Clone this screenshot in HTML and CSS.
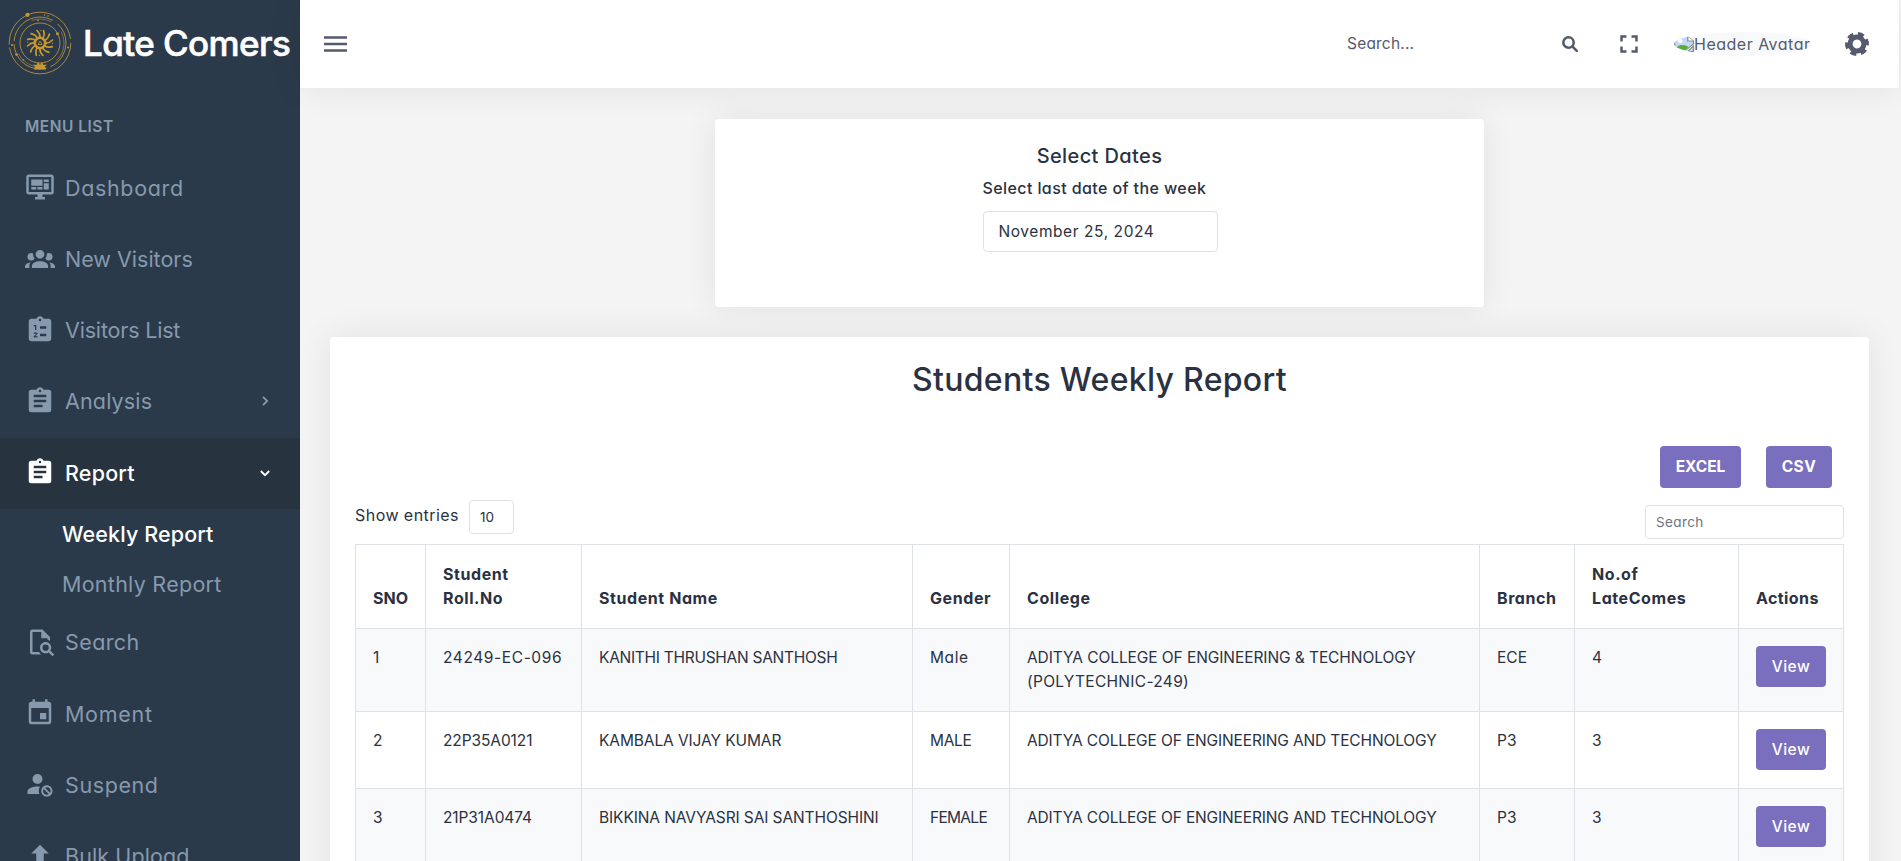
FILE: index.html
```html
<!DOCTYPE html>
<html lang="en">
<head>
<meta charset="utf-8">
<title>Late Comers - Students Weekly Report</title>
<link rel="stylesheet" href="styles.css">
</head>
<body>
<div class="app">
  <aside class="sidebar">
    <div class="brand">
      <svg class="brand-mark" viewBox="-32 -32 64 64" fill="none" stroke="#b98f3a">
        <circle r="30.8" stroke-width=".9" stroke-dasharray="92 3 94 4"/>
        <circle r="26" stroke-width=".9" stroke-dasharray="30 4 46 3 52 6"/>
        <circle r="24" stroke-width=".6" stroke-dasharray="20 14 30 40"/>
        <circle r="20" stroke-width=".9"/>
        <g fill="#c8972f" stroke="none">
          <circle cx="-12.5" cy="-28.2" r="2.1"/><circle cx="17.5" cy="-9.3" r="1.5"/>
          <circle cx="-23.5" cy="11.5" r="1.3"/><circle cx="-28" cy="2" r="1"/><circle cx="28" cy="4.5" r="1"/>
          <circle cx="8" cy="-27" r=".8"/><circle cx="4.5" cy="-28" r=".7"/><circle cx="-2" cy="-22.6" r=".8"/><circle cx="-16.5" cy="17" r=".8"/>
          <path d="M-6 26.5H6L5 23.5 7 21.5 3.5 22 2 19 0 22-2 19-3.500 22-7 21.500-5 23.500Z"/>
        </g>
        <circle r="5.200" stroke="#c8972f" stroke-width="2.600"/>
        <g stroke="#c8972f" stroke-width="1.700" stroke-linecap="round">
          <path id="ray" d="M5.500 0Q9 .5 12.500-3"/>
          <use href="#ray" transform="rotate(30)"/><use href="#ray" transform="rotate(60)"/><use href="#ray" transform="rotate(90)"/>
          <use href="#ray" transform="rotate(120)"/><use href="#ray" transform="rotate(150)"/><use href="#ray" transform="rotate(180)"/>
          <use href="#ray" transform="rotate(210)"/><use href="#ray" transform="rotate(240)"/><use href="#ray" transform="rotate(270)"/>
          <use href="#ray" transform="rotate(300)"/><use href="#ray" transform="rotate(330)"/>
        </g>
        <circle r="12.400" stroke="#c8972f" stroke-width="1.100" stroke-dasharray="1.100 8.640"/>
        <path d="M0-2L2 1.500H-2Z" stroke="#c8972f" stroke-width=".8"/>
      </svg>
      <span class="brand-name">Late Comers</span>
    </div>
    <div class="menu-title">MENU LIST</div>
    <nav class="menu">
      <a class="item"><svg class="ico" viewBox="0 0 24 24"><path d="M21,16V4H3V16H21M21,2A2,2 0 0,1 23,4V16A2,2 0 0,1 21,18H14V20H16V22H8V20H10V18H3C1.890,18 1,17.100 1,16V4C1,2.890 1.890,2 3,2H21M5,6H14V11H5V6M15,6H19V8H15V6M19,9V14H15V9H19M5,12H9V14H5V12M10,12H14V14H10V12Z"/></svg><span class="t-dash">Dashboard</span></a>
      <a class="item"><svg class="ico" viewBox="0 0 24 24"><path d="M12,5.500A3.500,3.500 0 0,1 15.500,9A3.500,3.500 0 0,1 12,12.500A3.500,3.500 0 0,1 8.500,9A3.500,3.500 0 0,1 12,5.500M5,8C5.560,8 6.080,8.150 6.530,8.420C6.380,9.850 6.800,11.270 7.660,12.380C7.160,13.340 6.160,14 5,14A3,3 0 0,1 2,11A3,3 0 0,1 5,8M19,8A3,3 0 0,1 22,11A3,3 0 0,1 19,14C17.840,14 16.840,13.340 16.340,12.380C17.200,11.270 17.620,9.850 17.470,8.420C17.920,8.150 18.440,8 19,8M5.500,18.250C5.500,16.180 8.410,14.500 12,14.500C15.590,14.500 18.500,16.180 18.500,18.250V20H5.500V18.250M0,20V18.500C0,17.110 1.890,15.940 4.450,15.600C3.860,16.280 3.500,17.220 3.500,18.250V20H0M24,20H20.500V18.250C20.500,17.220 20.140,16.280 19.550,15.600C22.110,15.940 24,17.110 24,18.500V20Z"/></svg><span>New Visitors</span></a>
      <a class="item"><svg class="ico" viewBox="0 0 24 24"><path fill-rule="evenodd" d="M19 3H14.820C14.400 1.840 13.300 1 12 1S9.600 1.840 9.180 3H5C3.900 3 3 3.900 3 5V19C3 20.100 3.900 21 5 21H19C20.100 21 21 20.100 21 19V5C21 3.900 20.100 3 19 3M12 3A1 1 0 0 1 12 5A1 1 0 0 1 12 3M7 8H9V12H8V9H7V8M10 17V18H7V17.080L9 15H7V14H9.250C9.660 14 10 14.340 10 14.750C10 14.950 9.920 15.140 9.790 15.270L8.120 17H10M17 17H12V15H17V17M17 11H12V9H17V11Z"/></svg><span class="t-vlist">Visitors List</span></a>
      <a class="item"><svg class="ico" viewBox="0 0 24 24"><path fill-rule="evenodd" d="M17,9H7V7H17M17,13H7V11H17M14,17H7V15H14M12,3A1,1 0 0,1 13,4A1,1 0 0,1 12,5A1,1 0 0,1 11,4A1,1 0 0,1 12,3M19,3H14.820C14.400,1.840 13.300,1 12,1C10.700,1 9.600,1.840 9.180,3H5A2,2 0 0,0 3,5V19A2,2 0 0,0 5,21H19A2,2 0 0,0 21,19V5A2,2 0 0,0 19,3Z"/></svg><span class="t-ana">Analysis</span><svg class="chev" viewBox="0 0 12 12"><path d="M4 1.800L8.200 6 4 10.200"/></svg></a>
      <a class="item active"><svg class="ico" viewBox="0 0 24 24"><path fill-rule="evenodd" d="M17,9H7V7H17M17,13H7V11H17M14,17H7V15H14M12,3A1,1 0 0,1 13,4A1,1 0 0,1 12,5A1,1 0 0,1 11,4A1,1 0 0,1 12,3M19,3H14.820C14.400,1.840 13.300,1 12,1C10.700,1 9.600,1.840 9.180,3H5A2,2 0 0,0 3,5V19A2,2 0 0,0 5,21H19A2,2 0 0,0 21,19V5A2,2 0 0,0 19,3Z"/></svg><span class="t-rep">Report</span><svg class="chev" viewBox="0 0 12 12"><path d="M1.800 4L6 8.200 10.200 4"/></svg></a>
      <div class="submenu">
        <a class="sub current"><span class="t-week">Weekly Report</span></a>
        <a class="sub"><span class="t-month">Monthly Report</span></a>
      </div>
      <a class="item"><svg class="ico" viewBox="0 0 24 24"><path fill-rule="evenodd" d="M6,2A2,2 0 0,0 4,4V20A2,2 0 0,0 6,22H13C12.300,21.500 11.700,20.800 11.300,20H6V4H13V9H18V10.200C18.700,10.400 19.400,10.700 20,11.200V8L14,2ZM16.500,12C19,12 21,14 21,16.500C21,17.380 20.750,18.210 20.310,18.900L23.390,22L22,23.390L18.880,20.320C18.190,20.750 17.370,21 16.500,21C14,21 12,19 12,16.500C12,14 14,12 16.500,12M16.500,14A2.500,2.500 0 0,0 14,16.500A2.500,2.500 0 0,0 16.500,19A2.500,2.500 0 0,0 19,16.500A2.500,2.500 0 0,0 16.500,14Z"/></svg><span class="t-sea">Search</span></a>
      <a class="item"><svg class="ico" viewBox="0 0 24 24"><path d="M19,19H5V8H19M16,1V3H8V1H6V3H5C3.890,3 3,3.890 3,5V19A2,2 0 0,0 5,21H19A2,2 0 0,0 21,19V5C21,3.890 20.100,3 19,3H18V1M17,12H12V17H17V12Z"/></svg><span class="t-mom">Moment</span></a>
      <a class="item"><svg class="ico" viewBox="0 0 24 24"><path fill-rule="evenodd" d="M10 4A4 4 0 0 0 6 8A4 4 0 0 0 10 12A4 4 0 0 0 14 8A4 4 0 0 0 10 4M17.500 13C15 13 13 15 13 17.500C13 20 15 22 17.500 22C20 22 22 20 22 17.500C22 15 20 13 17.500 13M10 14C5.580 14 2 15.790 2 18V20H11.500A6.500 6.500 0 0 1 11 17.500A6.500 6.500 0 0 1 11.950 14.140C11.320 14.060 10.680 14 10 14M17.500 14.500C19.160 14.500 20.500 15.840 20.500 17.500C20.500 18.060 20.350 18.580 20.080 19L16 14.920C16.420 14.650 16.940 14.500 17.500 14.500M14.920 16L19 20.080C18.580 20.350 18.060 20.500 17.500 20.500C15.840 20.500 14.500 19.160 14.500 17.500C14.500 16.940 14.650 16.420 14.920 16Z"/></svg><span class="t-sus">Suspend</span></a>
      <a class="item"><svg class="ico" viewBox="0 0 24 24"><path d="M9,16V10H5L12,3L19,10H15V16H9M5,20V18H19V20H5Z"/></svg><span class="t-bulk">Bulk Upload</span></a>
    </nav>
  </aside>

  <div class="main">
    <header class="topbar">
      <svg class="burger" viewBox="0 0 23 16"><path d="M0 1.500H23M0 8H23M0 14.500H23"/></svg>
      <div class="topsearch">
        <span class="t-hsearch">Search...</span>
        <svg class="glass" viewBox="0 0 16 16"><circle cx="6.500" cy="6.500" r="5.200"/><path d="M10.300 10.300L14.800 14.800"/></svg>
      </div>
      <svg class="full" viewBox="0 0 24 24"><path d="M5,5H10V7H7V10H5V5M14,5H19V10H17V7H14V5M17,14H19V19H14V17H17V14M10,17V19H5V14H7V17H10Z"/></svg>
      <div class="avatar">
        <svg class="broken" viewBox="0 0 16 16" preserveAspectRatio="none"><path d="M.5.500H11L15.500 5V8L8 15.500H.5Z" fill="#c3d9f8" stroke="#8c8c8c"/><path d="M11 .5V5H15.500" fill="#fff" stroke="#8c8c8c"/><circle cx="5" cy="5" r="2" fill="#fff"/><path d="M1 14Q3 8.500 6.500 9 10 9 11.500 11L8 15H1Z" fill="#58ad32"/><path d="M15.500 10V15.500H11Z" fill="#c3d9f8" stroke="#8c8c8c"/></svg>
        <span class="t-avatar">Header Avatar</span>
      </div>
      <svg class="gear" viewBox="-12 -12 24 24"><circle r="6.900" stroke-width="5"/><circle r="10" stroke-width="4" stroke-dasharray="6 4.472"/></svg>
    </header>

    <main class="content">
      <section class="card dates">
        <h4 class="dates-title">Select Dates</h4>
        <div class="field">
          <label>Select last date of the week</label>
          <div class="input">November 25, 2024</div>
        </div>
      </section>

      <section class="card report">
        <h1 class="report-title">Students Weekly Report</h1>
        <div class="exports">
          <button class="btn btn-excel">EXCEL</button>
          <button class="btn btn-csv">CSV</button>
        </div>
        <div class="controls">
          <div class="entries"><span class="t-show">Show entries</span><span class="select">10</span></div>
          <div class="filter">Search</div>
        </div>
        <table class="grid">
          <colgroup><col class="c1"><col class="c2"><col class="c3"><col class="c4"><col class="c5"><col class="c6"><col class="c7"><col class="c8"></colgroup>
          <thead>
            <tr><th class="h-sno">SNO</th><th>Student<br>Roll.No</th><th>Student Name</th><th>Gender</th><th>College</th><th>Branch</th><th>No.of<br>LateComes</th><th class="h-act">Actions</th></tr>
          </thead>
          <tbody>
            <tr class="tall"><td>1</td><td class="roll-a">24249-EC-096</td><td class="name-a">KANITHI THRUSHAN SANTHOSH</td><td class="gen-a">Male</td><td class="coll-a">ADITYA COLLEGE OF ENGINEERING &amp; TECHNOLOGY<br><span class="poly">(POLYTECHNIC-249)</span></td><td>ECE</td><td>4</td><td><button class="btn">View</button></td></tr>
            <tr><td>2</td><td class="roll-b">22P35A0121</td><td class="name-b">KAMBALA VIJAY KUMAR</td><td class="gen-b">MALE</td><td class="coll-b">ADITYA COLLEGE OF ENGINEERING AND TECHNOLOGY</td><td>P3</td><td>3</td><td><button class="btn">View</button></td></tr>
            <tr><td>3</td><td class="roll-b">21P31A0474</td><td class="name-b">BIKKINA NAVYASRI SAI SANTHOSHINI</td><td class="gen-c">FEMALE</td><td class="coll-b">ADITYA COLLEGE OF ENGINEERING AND TECHNOLOGY</td><td>P3</td><td>3</td><td><button class="btn">View</button></td></tr>
          </tbody>
        </table>
      </section>
    </main>
  </div>
</div>
</body>
</html>
```
FILE: styles.css
```css
* { box-sizing: border-box; }

html, body { height: 100%; margin: 0; overflow: hidden; }

body {
  font: 15.5px/24px Inter, "Open Sans", "Liberation Sans", sans-serif;
  font-feature-settings: "cv11" 1;
  color: #2a3142;
  background: #f4f4f4;
}

.app { display: flex; height: 100vh; overflow: hidden; }

/* Sidebar */
.sidebar { flex: none; width: 300px; height: 100%; overflow: hidden; background: #2b3a4a; color: #8699ad; }
.brand { display: flex; align-items: center; height: 88px; padding: 0 0 3px 8px; }
.brand-mark { flex: none; width: 64px; height: 64px; }
.brand-name {
  margin-left: 11px;
  color: #fff;
  font-size: 35px;
  font-weight: 500;
  line-height: 44px;
  letter-spacing: -0.6px;
  white-space: nowrap;
  -webkit-text-stroke: 0.6px #fff;
}
.menu-title { height: 65px; padding: 27px 25px 0; font-size: 15.5px; font-weight: 600; letter-spacing: 0.5px; }
.item { display: flex; align-items: center; height: 71.25px; padding: 0 29px 0 25px; font-size: 21.5px; white-space: nowrap; }
.item .ico { flex: none; width: 30px; height: 30px; margin: -3px 10px 0 0; fill: currentColor; }
.item span { margin-top: -2px; }
.item .chev { width: 12px; height: 12px; margin: -2px 0 0 auto; fill: none; stroke: currentColor; stroke-width: 1.8; }
.item.active { background: #27333f; color: #fff; font-weight: 500; }
.submenu { height: 98.5px; padding-left: 62px; font-size: 21.5px; }
.sub { display: flex; align-items: center; height: 49.5px; white-space: nowrap; }
.sub.current { color: #fff; font-weight: 500; }
.t-dash { letter-spacing: 0.65px; }
.t-vlist { letter-spacing: -0.18px; }
.t-ana { letter-spacing: 0.15px; }
.t-rep { letter-spacing: 0.2px; }
.t-week { letter-spacing: 0.12px; }
.t-month { letter-spacing: 0.27px; }
.t-sea { letter-spacing: 0.4px; }
.t-mom { letter-spacing: 0.7px; }
.t-sus { letter-spacing: 0.6px; }
.t-bulk { letter-spacing: 0.1px; }

/* Top bar */
.main { flex: 1; min-width: 0; display: flex; flex-direction: column; }
.topbar {
  display: flex;
  align-items: center;
  flex: none;
  height: 88px;
  margin-right: 2px;
  padding: 0 30px 0 24px;
  background: #fff;
  color: #555b6d;
  box-shadow: 0 0 35px rgba(0, 0, 0, 0.08);
}
.burger { width: 23px; height: 16px; fill: none; stroke: currentColor; stroke-width: 2.4; }
.topsearch { display: flex; align-items: center; justify-content: space-between; width: 231px; margin-left: auto; }
.t-hsearch { letter-spacing: 0.2px; }
.glass { width: 16px; height: 16px; margin-top: -1px; fill: none; stroke: currentColor; stroke-width: 2.6; stroke-linecap: round; }
.full { width: 30px; height: 30px; margin: 0 0 0 36px; fill: currentColor; }
.avatar { display: flex; align-items: center; width: 138px; height: 24px; margin-left: 30px; overflow: hidden; border-radius: 50%; background: #f8f9fb; white-space: nowrap; }
.broken { flex: none; width: 20px; height: 16px; }
.t-avatar { font-size: 16px; letter-spacing: 0.5px; }
.gear { width: 24px; height: 24px; margin-left: 33px; fill: none; stroke: currentColor; transform: rotate(-27deg); }

/* Cards */
.content { flex: 1; min-height: 0; padding: 31px 32px 0 30px; display: flex; flex-direction: column; align-items: center; gap: 30px; }
.card { flex: none; background: #fff; border-radius: 4px; box-shadow: 0 0 35px rgba(0, 0, 0, 0.08); }
.dates { display: flex; flex-direction: column; align-items: center; width: 769px; height: 188px; padding-top: 25px; }
.dates-title { margin: 0 0 8px; font-size: 20px; font-weight: 500; line-height: 24px; letter-spacing: 0.38px; }
.field { display: flex; flex-direction: column; width: 235px; margin-left: 1px; }
.field label { font-size: 16px; font-weight: 500; letter-spacing: 0.4px; white-space: nowrap; }
.input { height: 41px; margin-top: 11px; padding: 8px 15px; border: 1px solid #dee2e6; border-radius: 4px; letter-spacing: 0.57px; }

.report { width: 1539px; height: 640px; padding: 24px 25px 0; }
.report-title { margin: 0; font-size: 32px; font-weight: 500; line-height: 38px; letter-spacing: 0.3px; text-align: center; }
.exports { display: flex; justify-content: flex-end; gap: 25px; margin-top: 47px; padding-right: 12px; }
.btn { display: block; height: 42px; padding: 0; border: 0; border-radius: 4px; background: #7a6fbe; color: #fff; font: inherit; font-weight: 500; font-feature-settings: inherit; letter-spacing: 0.5px; text-align: center; }
.btn-excel { width: 81px; font-weight: 700; letter-spacing: 0; }
.btn-csv { width: 66px; font-weight: 700; }
.controls { display: flex; justify-content: space-between; height: 56px; padding-top: 12px; }
.entries { display: flex; align-items: center; height: 34px; white-space: nowrap; }
.t-show { width: 114px; margin-top: -4px; font-size: 16px; letter-spacing: 0.45px; }
.select { width: 45px; height: 34px; padding: 4px 10px; border: 1px solid #dee2e6; border-radius: 4px; font-size: 13.5px; }
.filter { width: 199px; height: 34px; margin-top: 5px; padding: 4px 10px; border: 1px solid #dee2e6; border-radius: 4px; color: #6c757d; font-size: 13.5px; letter-spacing: 0.4px; }

/* Table */
.grid { width: 1489px; table-layout: fixed; border-collapse: collapse; }
.c1 { width: 70px; } .c2 { width: 156px; } .c3 { width: 331px; } .c4 { width: 97px; }
.c5 { width: 470px; } .c6 { width: 95px; } .c7 { width: 164px; } .c8 { width: 105px; }
.grid th, .grid td { padding: 17px 0 0 17px; border: 1px solid #dee2e6; text-align: left; vertical-align: top; white-space: nowrap; }
.grid th { height: 84px; padding-bottom: 18px; vertical-align: bottom; font-size: 16px; font-weight: 700; letter-spacing: 0.58px; }
.grid .h-sno { letter-spacing: 0.1px; }
.grid .h-act { letter-spacing: 0.42px; }
.grid td { height: 77px; }
.grid .tall td { height: 83px; }
.grid tbody tr:nth-child(odd) { background: #f8f9fb; }
.grid .btn { width: 70px; height: 41px; }
.roll-a { letter-spacing: 0.6px; }
.roll-b, .name-b { letter-spacing: -0.1px; }
.name-a { letter-spacing: -0.28px; }
.gen-a { letter-spacing: 0.6px; }
.gen-b { letter-spacing: -0.3px; }
.gen-c { letter-spacing: -0.7px; }
.coll-a { letter-spacing: -0.08px; }
.coll-b { letter-spacing: -0.14px; }
.poly { letter-spacing: 0.3px; }
```
